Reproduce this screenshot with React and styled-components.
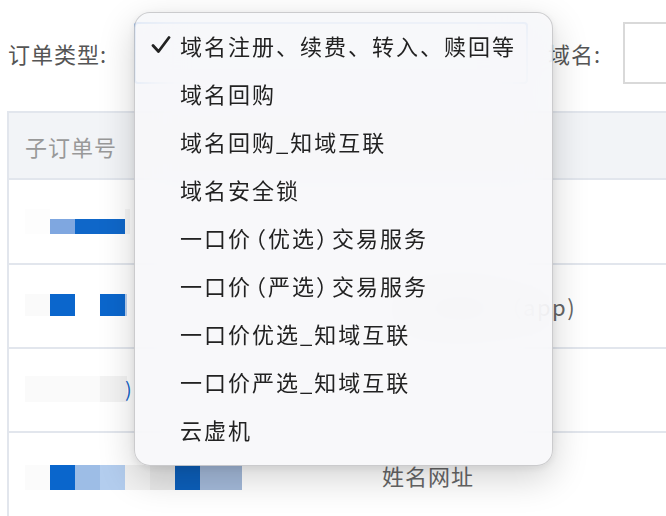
import React from "react";
import styled, { createGlobalStyle } from "styled-components";

const GlobalStyle = createGlobalStyle`
  html, body { margin: 0; padding: 0; background: #ffffff; overflow: hidden; }
  body { font-family: "Noto Sans CJK SC", "Noto Sans", sans-serif; }
  #root { width: 666px; height: 516px; overflow: hidden; }
`;

const Page = styled.div`
  padding: 22px 0 0 7px;
  width: 900px;
`;

const FilterBar = styled.div`
  display: flex;
  align-items: center;
  height: 62px;
  & > * { flex: none; }
`;

const Label = styled.span`
  font-size: 22px;
  color: #555;
  letter-spacing: 1px;
  white-space: nowrap;
  margin-left: ${(p) => p.$ml || 0}px;
  width: ${(p) => (p.$w ? p.$w + "px" : "auto")};
`;

const SelectWrap = styled.div`
  position: relative;
  width: 394px;
  height: 62px;
  box-sizing: border-box;
  border: 2px solid #1f6fd6;
  border-radius: 4px;
  background: #fff;
`;

const TextInput = styled.div`
  margin-left: 22px;
  width: 200px;
  height: 62px;
  box-sizing: border-box;
  border: 2px solid #d9d9d9;
  background: #fff;
`;

const Table = styled.div`
  margin-top: 27px;
  border-left: 2px solid #e2e6ed;
  display: grid;
  grid-template-columns: 353px 1fr;
`;

const HeadCell = styled.div`
  height: 69px;
  box-sizing: border-box;
  background: #f2f4f7;
  border-top: 2px solid #e2e6ed;
  border-bottom: 2px solid #e2e6ed;
  display: flex;
  align-items: center;
  padding-left: 16px;
  font-size: 22px;
  color: #999;
  letter-spacing: 1px;
`;

const Cell = styled.div`
  height: ${(p) => p.$h}px;
  box-sizing: border-box;
  border-bottom: 2px solid #e2e6ed;
  display: flex;
  align-items: center;
  padding-left: ${(p) => (p.$second ? 20 : 16)}px;
  font-size: 22px;
  color: #666;
  letter-spacing: ${(p) => p.$ls || 1}px;
  white-space: nowrap;
`;

const Mosaic = styled.div`
  display: flex;
  align-items: ${(p) => p.$align || "center"};
  height: 25px;
  margin-top: ${(p) => p.$dy || 0}px;
`;

const Pix = styled.div`
  width: ${(p) => p.$w}px;
  height: ${(p) => p.$h}px;
  background: ${(p) => p.$c};
  flex: none;
`;

const BlueParen = styled.span`
  font-size: 20px;
  color: #1565c8;
  line-height: 1;
  margin-left: -2px;
`;

const Menu = styled.div`
  position: absolute;
  left: -2px;
  top: -12px;
  width: 419px;
  box-sizing: border-box;
  padding: 8px 0 12px;
  border-radius: 16px;
  border: 1px solid rgba(0, 0, 0, 0.18);
  background: rgba(247, 247, 249, 0.86);
  backdrop-filter: blur(24px);
  box-shadow: 0 12px 36px rgba(0, 0, 0, 0.18), 0 2px 8px rgba(0, 0, 0, 0.08);
  z-index: 10;
`;

const Item = styled.div`
  height: 48px;
  display: flex;
  align-items: center;
  padding-left: 16px;
  font-size: 22px;
  color: #222;
  letter-spacing: 2px;
  white-space: nowrap;
`;

const Punct = styled.span`
  font-feature-settings: "halt";
  margin-left: ${(p) => (p.$open ? 3 : 0)}px;
  margin-right: ${(p) => (p.$open ? 0 : 3)}px;
`;

const CheckSlot = styled.span`
  width: 29px;
  display: flex;
  align-items: center;
`;

const Check = () => (
  <svg width="20" height="18" viewBox="0 0 20 18">
    <path
      d="M2 9.5 L7.5 15.5 L18 1.5"
      fill="none"
      stroke="#222"
      strokeWidth="2.8"
      strokeLinecap="round"
      strokeLinejoin="round"
    />
  </svg>
);

const renderLabel = (text) =>
  text.split(/([（）])/).map((part, i) =>
    part === "（" || part === "）" ? (
      <Punct key={i} $open={part === "（"}>
        {part}
      </Punct>
    ) : (
      part
    )
  );

const options = [
  "域名注册、续费、转入、赎回等",
  "域名回购",
  "域名回购_知域互联",
  "域名安全锁",
  "一口价（优选）交易服务",
  "一口价（严选）交易服务",
  "一口价优选_知域互联",
  "一口价严选_知域互联",
  "云虚机",
];

const rows = [
  {
    h: 85,
    align: "flex-end",
    dy: 0,
    cells: [
      [25, 25, "#fdfdfd"],
      [25, 15, "#7fa7e0"],
      [50, 15, "#0f67c9"],
      [5, 25, "#f6f6f6"],
    ],
    text: "",
  },
  {
    h: 84,
    align: "center",
    dy: -3,
    ls: 1.5,
    cells: [
      [25, 22, "#fafafa"],
      [25, 22, "#0b66cc"],
      [25, 22, "#ffffff"],
      [25, 22, "#0b66cc"],
      [2, 22, "#b9d0ef"],
    ],
    text: "一口价交易（app)",
  },
  {
    h: 84,
    align: "center",
    dy: -2,
    cells: [
      [75, 26, "#fafafa"],
      [27, 26, "#f3f3f3"],
    ],
    paren: true,
    text: "",
  },
  {
    h: 85,
    align: "center",
    dy: 6,
    cells: [
      [25, 25, "#fbfbfb"],
      [25, 25, "#0a66cc"],
      [25, 25, "#9dbde6"],
      [25, 25, "#b3cdee"],
      [25, 25, "#f2f2f2"],
      [25, 25, "#e8e8e8"],
      [25, 25, "#0c5fba"],
      [42, 25, "#a3b9d9"],
    ],
    text: "姓名网址",
  },
];

export default function App() {
  return (
    <>
      <GlobalStyle />
      <Page>
        <FilterBar>
          <Label $w={126} $ml={1}>订单类型:</Label>
          <SelectWrap>
            <Menu>
              {options.map((o, i) => (
                <Item key={o}>
                  <CheckSlot>{i === 0 ? <Check /> : null}</CheckSlot>
                  {renderLabel(o)}
                </Item>
              ))}
            </Menu>
          </SelectWrap>
          <Label $ml={20}>域名:</Label>
          <TextInput />
        </FilterBar>
        <Table>
          <HeadCell>子订单号</HeadCell>
          <HeadCell />
          {rows.map((r, i) => (
            <React.Fragment key={i}>
              <Cell $h={r.h}>
                <Mosaic $align={r.align} $dy={r.dy}>
                  {r.cells.map(([w, h, c], j) => (
                    <Pix key={j} $w={w} $h={h} $c={c} />
                  ))}
                  {r.paren ? <BlueParen>)</BlueParen> : null}
                </Mosaic>
              </Cell>
              <Cell $h={r.h} $second $ls={r.ls}>
                {r.text}
              </Cell>
            </React.Fragment>
          ))}
        </Table>
      </Page>
    </>
  );
}
